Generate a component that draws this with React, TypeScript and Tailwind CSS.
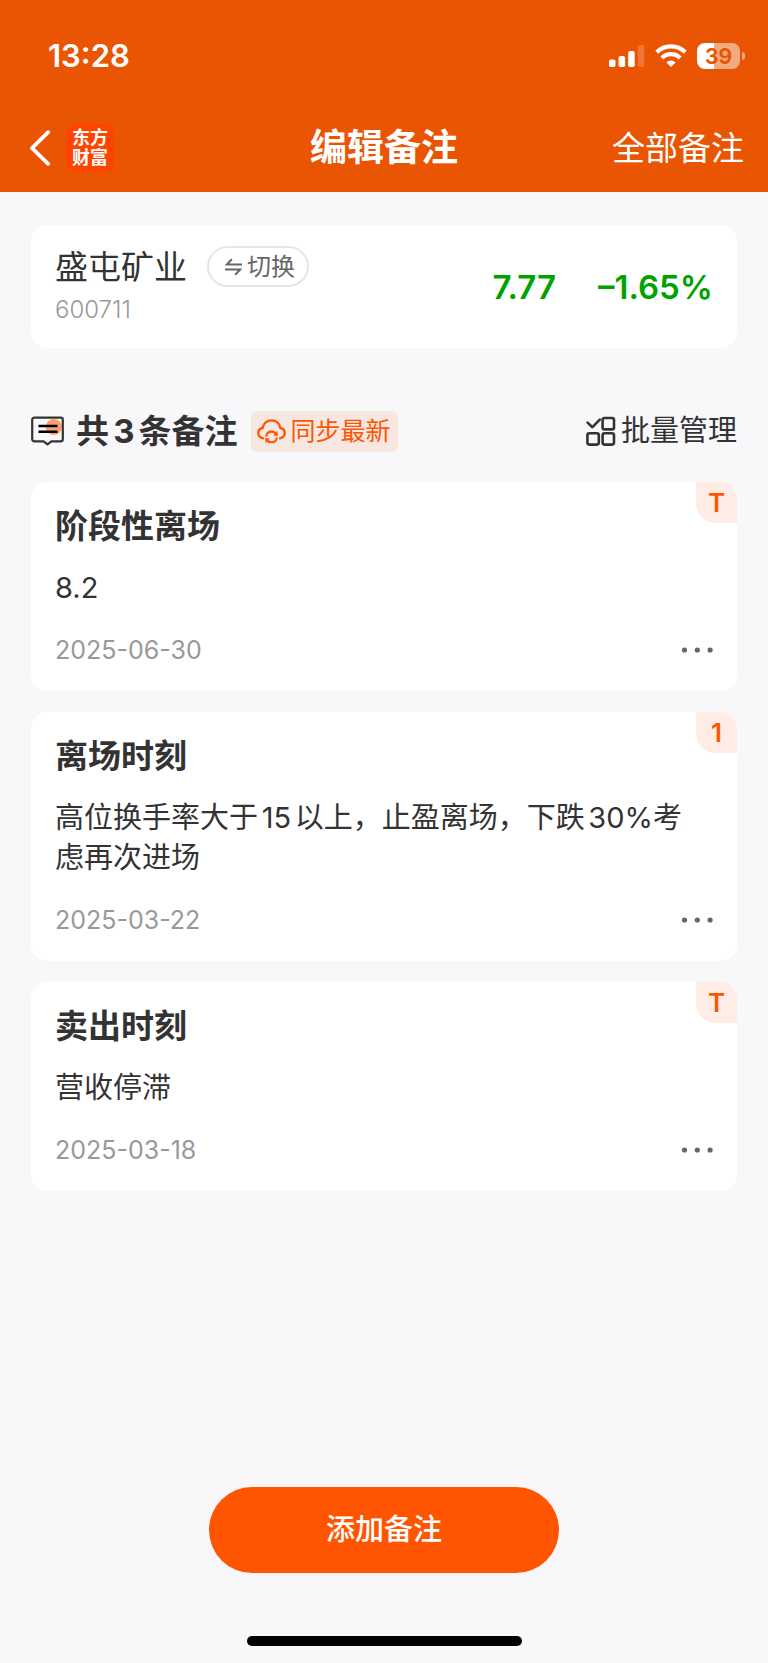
import { useState } from 'react';

type Note = {
  id: number;
  title: string;
  content: string;
  date: string;
  tag: string;
};

const NOTES: Note[] = [
  { id: 1, title: '阶段性离场', content: '8.2', date: '2025-06-30', tag: 'T' },
  {
    id: 2,
    title: '离场时刻',
    content: '高位换手率大于15以上，止盈离场，下跌30%考虑再次进场',
    date: '2025-03-22',
    tag: '1',
  },
  { id: 3, title: '卖出时刻', content: '营收停滞', date: '2025-03-18', tag: 'T' },
];

function StatusBar() {
  return (
    <div className="flex h-28 items-center justify-between pr-[23px] pl-12">
      <span className="text-[31px] leading-9 font-semibold">13:28</span>
      <div className="flex items-center gap-[10px]">
        <svg width="36" height="24" viewBox="0 0 36 24" fill="currentColor" aria-hidden="true">
          <rect x="0" y="15.5" width="6.5" height="7.5" rx="1.8" />
          <rect x="9.6" y="12" width="6.5" height="11" rx="1.8" />
          <rect x="19.2" y="7" width="6.5" height="16" rx="1.8" />
          <rect x="28.8" y="1" width="6.5" height="22" rx="1.8" opacity="0.2" />
        </svg>
        <svg width="32" height="24" viewBox="0 0 32 24" aria-hidden="true">
          <g fill="none" stroke="currentColor" strokeWidth="4.2">
            <path d="M1.8 8.3a20.2 20.2 0 0 1 28.4 0" />
            <path d="M6.9 13.9a12.9 12.9 0 0 1 18.2 0" />
          </g>
          <path d="M16 23l-4.6-4.6a6.6 6.6 0 0 1 9.2 0z" fill="currentColor" />
        </svg>
        <div className="flex items-center gap-[2px]">
          <div className="flex h-[26px] w-[43px] items-center justify-center rounded-lg bg-linear-to-r from-white from-39% to-white/50 to-39% text-[21px] leading-none font-bold text-[#ea5504]">
            39
          </div>
          <span className="h-2 w-[3px] rounded-r-full bg-white/50" />
        </div>
      </div>
    </div>
  );
}

function NavBar() {
  return (
    <div className="grid h-[72px] grid-cols-[1fr_auto_1fr] items-center px-6">
      <div className="flex items-center gap-[15px] pl-1">
        <button type="button" aria-label="返回">
          <svg width="23" height="36" viewBox="0 0 23 36" fill="none" stroke="currentColor" strokeWidth="3.8" strokeLinecap="round" strokeLinejoin="round">
            <path d="M20.2 2.2L4 18.2l16.2 15.6" />
          </svg>
        </button>
        <div className="flex size-12 flex-col items-center justify-center rounded-[10px] bg-[#ff4400] text-[18px] leading-5 font-bold">
          <span>东方</span>
          <span>财富</span>
        </div>
      </div>
      <h1 className="text-[37px] leading-[50px] font-bold">编辑备注</h1>
      <a href="#all" className="justify-self-end text-[33px] leading-[50px]">
        全部备注
      </a>
    </div>
  );
}

function StockCard() {
  return (
    <section className="flex items-center justify-between rounded-2xl bg-white px-6 pt-[21px] pb-5">
      <div>
        <div className="flex items-center gap-5">
          <h2 className="text-[33px] leading-10">盛屯矿业</h2>
          <button type="button" className="flex h-[41px] items-center gap-[5px] rounded-full border-2 border-[#e6e6e6] pr-3 pl-4 text-2xl leading-8 text-[#666]">
            <svg width="17" height="18" viewBox="0 0 17 18" fill="none" stroke="currentColor" strokeWidth="2">
              <path d="M17 6.5H1.8L6.8 1.3" />
              <path d="M0 11.5h15.2l-5 5.2" />
            </svg>
            切换
          </button>
        </div>
        <p className="mt-[5px] text-2xl leading-9 font-light text-[#999]">600711</p>
      </div>
      <div className="flex gap-[42px] text-[33px] leading-10 font-semibold text-[#00a200]">
        <span>7.77</span>
        <span>–1.65%</span>
      </div>
    </section>
  );
}

function ListHeader({ count }: { count: number }) {
  return (
    <div className="mt-[61px] mb-[29px] flex items-center justify-between">
      <div className="flex items-center gap-[13px]">
        <div className="flex items-center gap-3">
          <svg width="33" height="30" viewBox="0 0 33 30" fill="none" aria-hidden="true">
            <circle cx="22.8" cy="11" r="8" fill="#ff9f70" />
            <path
              d="M3.4 1.6h26.2a2.2 2.2 0 0 1 2.2 2.2v19.4a2.2 2.2 0 0 1-2.2 2.2h-9.2l-3.9 3-3.9-3H3.4a2.2 2.2 0 0 1-2.2-2.2V3.8a2.2 2.2 0 0 1 2.2-2.2z"
              stroke="#333"
              strokeWidth="2.2"
              strokeLinejoin="round"
            />
            <path d="M7.5 10h19M7.5 15.8h19" stroke="#000" strokeWidth="2.4" />
          </svg>
          <h2 className="text-[33px] leading-10 font-bold">共{count}条备注</h2>
        </div>
        <button type="button" className="flex h-[41px] items-center gap-[5px] rounded-md bg-[#ff5500]/10 pr-[7px] pl-[6px] text-[25px] leading-8 text-[#ff5500]">
          <svg width="29" height="25" viewBox="0 0 29 25" fill="none" stroke="currentColor" strokeWidth="2.3" strokeLinecap="round">
            <path d="M6 19.3C3.1 18.7 1.3 16.7 1.3 14.1c0-2.6 1.8-4.7 4.3-5.1C6.4 4.5 10 1.3 14.5 1.3S22.6 4.5 23.4 9c2.5.4 4.3 2.5 4.3 5.1 0 2.6-1.8 4.6-4.7 5.2" />
            <path d="M9.3 16.6c.5-2.3 2.6-4 5.2-4 2.2 0 4.1 1.2 4.9 3M19.7 19.3c-.5 2.3-2.6 4-5.2 4-2.2 0-4.1-1.2-4.9-3" strokeWidth="2.1" />
            <path d="M19.9 12.9v3h-2.6M9.1 23.1v-3h2.6" strokeWidth="1.5" />
          </svg>
          同步最新
        </button>
      </div>
      <button type="button" className="flex items-center gap-[5px] text-[29px] leading-[44px]">
        <svg width="30" height="30" viewBox="0 0 30 30" fill="none" stroke="currentColor" strokeWidth="2.6" strokeLinecap="round" strokeLinejoin="round">
          <path d="M1.6 6.6l4.8 4.6 7.4-7.6" />
          <rect x="16.6" y="2" width="11.4" height="11.4" rx="2" />
          <rect x="1.4" y="17.2" width="11.4" height="11.4" rx="2" />
          <rect x="16.6" y="17.2" width="11.4" height="11.4" rx="2" />
        </svg>
        批量管理
      </button>
    </div>
  );
}

function NoteCard({ note }: { note: Note }) {
  return (
    <article className="relative overflow-hidden rounded-2xl bg-white px-6 pt-[22px] pb-[23px]">
      <span className="absolute top-0 right-0 flex size-[41px] items-center justify-center rounded-bl-[20px] bg-[#ffede5] text-[26px] leading-none font-semibold text-[#ff5500]">
        {note.tag}
      </span>
      <h3 className="text-[33px] leading-11 font-bold">{note.title}</h3>
      <p className="mt-5 pr-5 text-[29px] leading-10">{note.content}</p>
      <div className="mt-6 flex items-center justify-between">
        <time dateTime={note.date} className="text-[25px] leading-9 text-[#999]">
          {note.date}
        </time>
        <button type="button" aria-label="更多操作" className="text-[#666]">
          <svg width="32" height="16" viewBox="0 0 32 16" fill="currentColor">
            <circle cx="3.5" cy="8" r="2.6" />
            <circle cx="16.3" cy="8" r="2.6" />
            <circle cx="29.1" cy="8" r="2.6" />
          </svg>
        </button>
      </div>
    </article>
  );
}

export default function App() {
  const [notes] = useState<Note[]>(NOTES);

  return (
    <div className="flex min-h-screen flex-col bg-[#f8f8fb] font-[Inter,'Noto_Sans_CJK_SC',sans-serif] text-[#333] [text-autospace:normal]">
      <header className="bg-[#ea5504] pb-2 text-white">
        <StatusBar />
        <NavBar />
      </header>

      <main className="flex-1 px-[31px] pt-[33px] pb-8">
        <StockCard />
        <ListHeader count={notes.length} />
        <div className="flex flex-col gap-[21px]">
          {notes.map((note) => (
            <NoteCard key={note.id} note={note} />
          ))}
        </div>
      </main>

      <footer className="flex flex-col items-center pb-[17px]">
        <button type="button" className="h-[86px] w-[350px] rounded-full bg-[#ff5500] text-[29px] font-medium text-white">
          添加备注
        </button>
        <div className="mt-[63px] h-[10px] w-[275px] rounded-full bg-black" />
      </footer>
    </div>
  );
}
